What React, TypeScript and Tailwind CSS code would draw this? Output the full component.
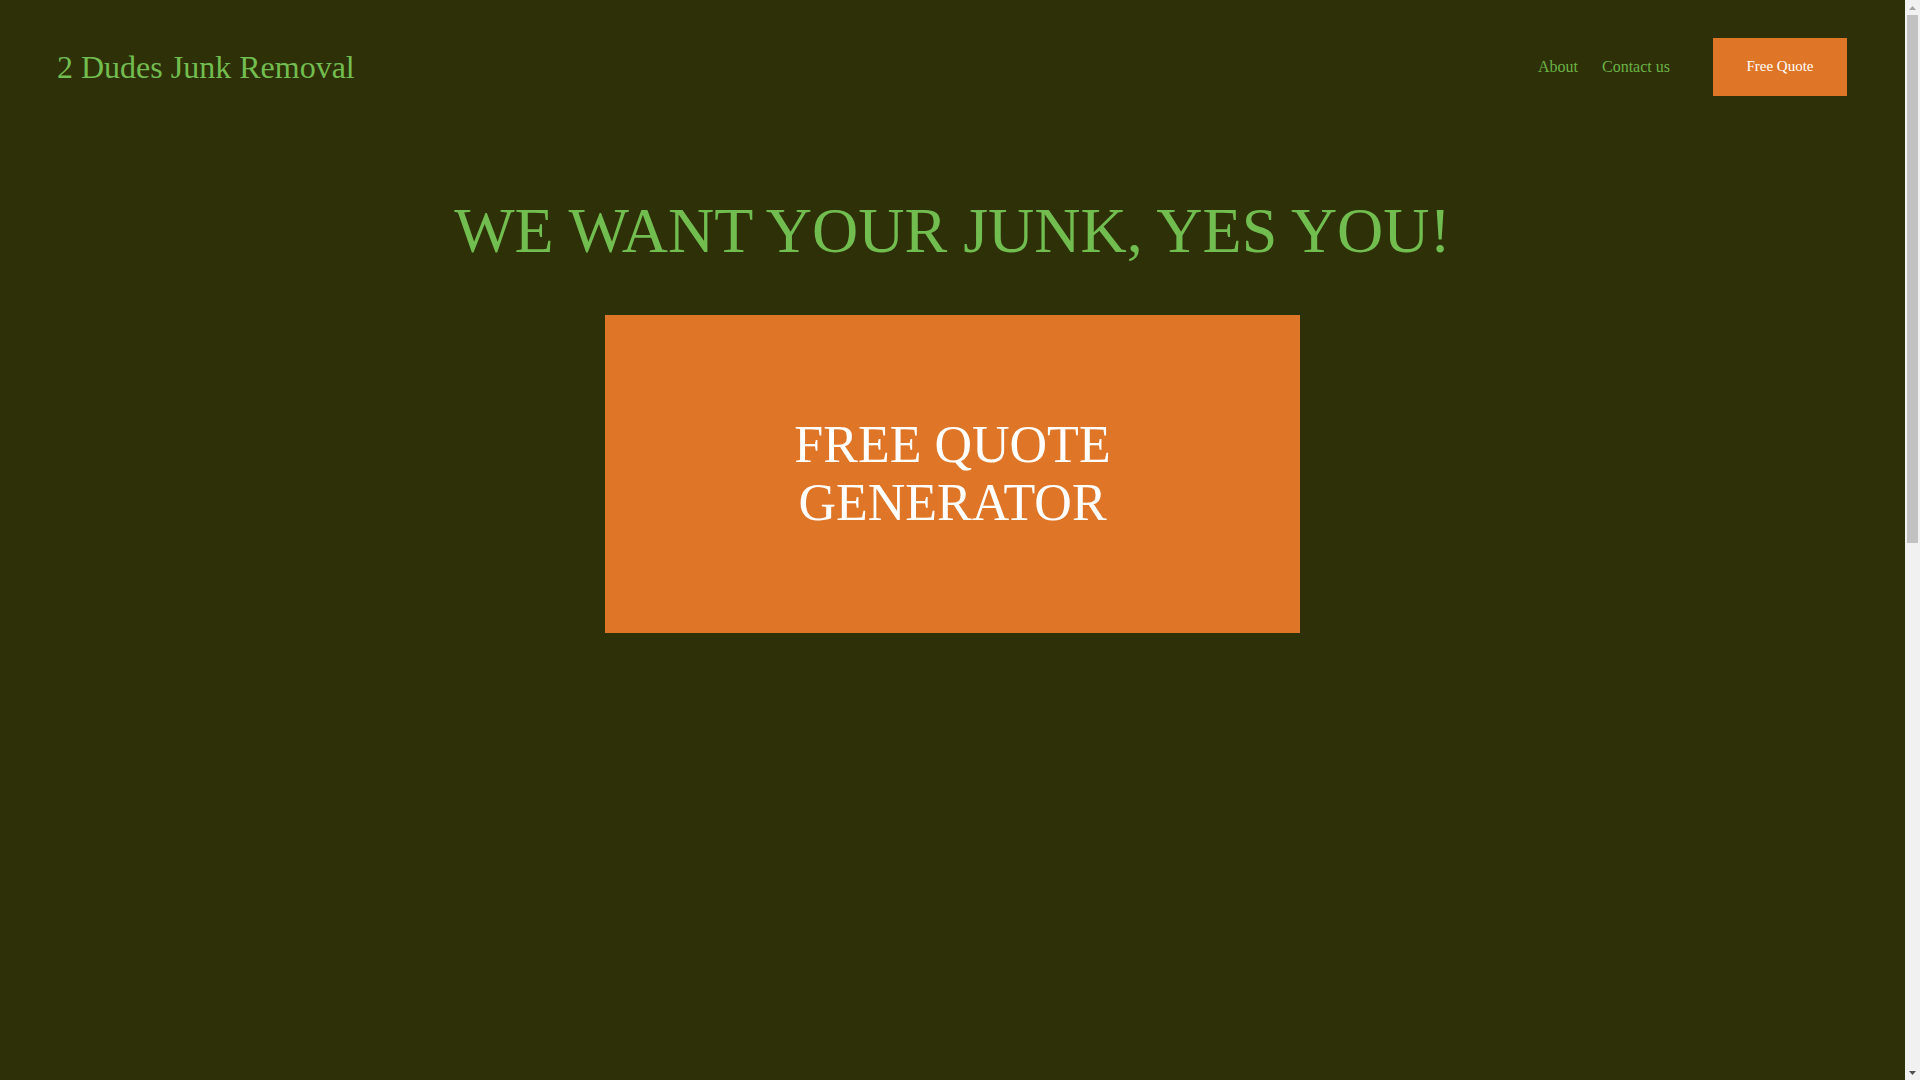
import React from "react";

function ScrollStrip() {
  return (
    <div className="flex h-full w-[15px] shrink-0 flex-col items-center bg-[#f1f1f1]">
      <div className="flex h-[15px] w-full items-center justify-center">
        <svg width="7" height="4" viewBox="0 0 7 4">
          <polygon points="3.5,0 7,4 0,4" fill="#a3a3a3" />
        </svg>
      </div>
      <div className="h-[528px] w-[11px] bg-[#c1c1c1]" />
      <div className="flex-1" />
      <div className="flex h-[15px] w-full items-center justify-center">
        <svg width="7" height="4" viewBox="0 0 7 4">
          <polygon points="0,0 7,0 3.5,4" fill="#505050" />
        </svg>
      </div>
    </div>
  );
}

export default function App() {
  return (
    <div
      className="flex h-screen w-full overflow-hidden bg-[#2e3007]"
      style={{ fontFamily: '"Liberation Serif", "Times New Roman", serif' }}
    >
      <div className="min-w-0 flex-1 overflow-hidden">
        <div className="min-h-[2150px]">
          <header className="flex h-[134px] items-center justify-between pl-[57px] pr-[58px]">
            <a className="text-[32px] leading-[1.15] text-[#72bd4f]" href="#">
              2 Dudes Junk Removal
            </a>
            <nav className="flex items-center">
              <a className="text-[16px] leading-[1.15] text-[#6cb446]" href="#">
                About
              </a>
              <a className="ml-[24px] text-[16px] leading-[1.15] text-[#6cb446]" href="#">
                Contact us
              </a>
              <a
                className="ml-[43px] flex h-[58px] w-[134px] items-center justify-center bg-[#df7526] text-[15px] leading-[1.15] text-white"
                href="#"
              >
                Free Quote
              </a>
            </nav>
          </header>
          <main className="flex flex-col items-center">
            <h1 className="mt-[60px] h-[73px] text-center text-[64px] font-normal leading-[73px] text-[#72bd4f]">
              WE WANT YOUR JUNK, YES YOU!
            </h1>
            <a
              href="#"
              className="mt-[48px] flex h-[318px] w-[695px] items-center justify-center bg-[#df7526] text-center text-[52px] leading-[58px] text-white"
            >
              FREE QUOTE
              <br />
              GENERATOR
            </a>
          </main>
        </div>
      </div>
      <ScrollStrip />
    </div>
  );
}
